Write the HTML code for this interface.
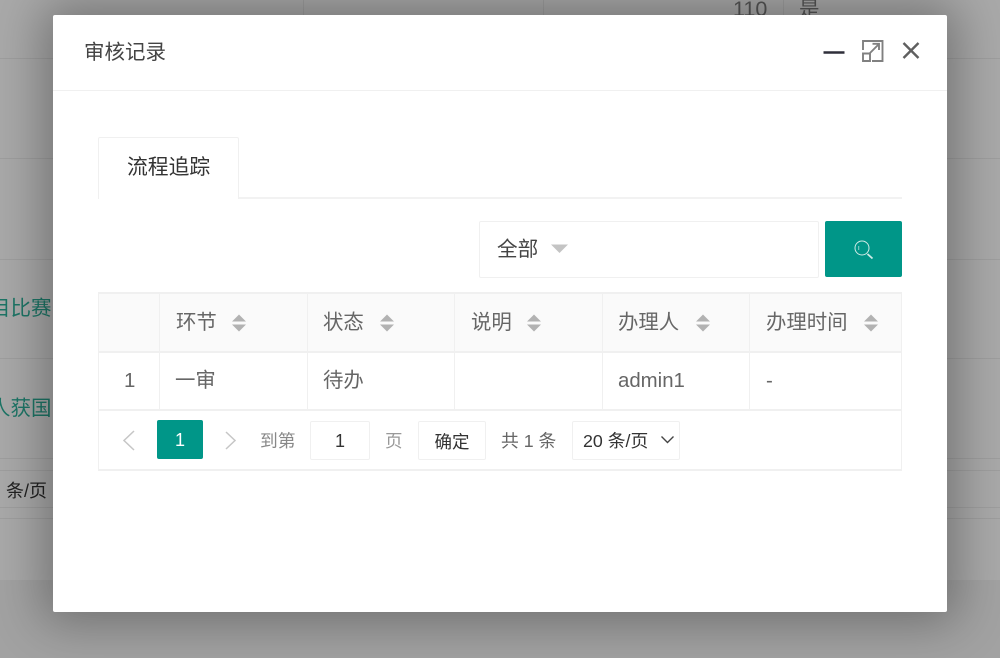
<!DOCTYPE html>
<html lang="zh">
<head>
<meta charset="utf-8">
<style>
html,body{margin:0;padding:0;background:#a9a9a9}
body{width:1000px;height:658px;position:relative;overflow:hidden;background:#a9a9a9;font-family:"Liberation Sans","Noto Sans CJK SC",sans-serif;color:#666;filter:blur(.35px)}
.a{position:absolute;white-space:nowrap}
.bgl{position:absolute;background:#9e9e9e}
.m{position:absolute;left:53px;top:15px;width:894px;height:597px;background:#fff;border-radius:2px;box-shadow:0 0 50px 10px rgba(0,0,0,.32)}
.t{font-size:20.500px;line-height:24px}
.ln{position:absolute;background:#f0f0f0}
.sort{position:absolute;width:14px;height:18px}
.h{font-size:20.400px;line-height:26px;top:310px}
.c{font-size:20.400px;line-height:26px}
</style>
</head>
<body>
<div class="a" style="left:0;top:580px;width:1000px;height:78px;background:#a2a2a2"></div>
<div class="bgl" style="left:0;top:58px;width:1000px;height:1px"></div>
<div class="bgl" style="left:0;top:158px;width:1000px;height:1px"></div>
<div class="bgl" style="left:0;top:259px;width:1000px;height:1px"></div>
<div class="bgl" style="left:0;top:358px;width:1000px;height:1px"></div>
<div class="bgl" style="left:0;top:458px;width:1000px;height:1px"></div>
<div class="bgl" style="left:0;top:470px;width:1000px;height:1px"></div>
<div class="bgl" style="left:0;top:507px;width:1000px;height:1px"></div>
<div class="bgl" style="left:0;top:518px;width:1000px;height:1px"></div>
<div class="bgl" style="left:303px;top:0;width:1px;height:15px"></div>
<div class="bgl" style="left:543px;top:0;width:1px;height:15px"></div>
<div class="bgl" style="left:783px;top:0;width:1px;height:15px"></div>
<div class="a" style="left:733px;top:-3px;color:#555;font-size:21.500px;line-height:24px">110</div>
<div class="a" style="left:799px;top:-2px;color:#555;font-size:20.500px;line-height:24px">是</div>
<div class="a t" style="left:-10px;top:297px;color:#1d7566">目比赛</div>
<div class="a t" style="left:-10px;top:397px;color:#1d7566">人获国</div>
<div class="a" style="left:6px;top:481px;color:#222;font-size:18px;line-height:20px">条/页</div>

<div class="m"></div>

<div class="a" style="left:84px;top:40px;font-size:20.500px;line-height:26px;color:#444">审核记录</div>
<div class="ln" style="left:53px;top:90px;width:894px;height:1px"></div>
<svg class="a" style="left:820px;top:38px" width="105" height="28" viewBox="0 0 105 28" fill="none">
<path d="M3.500 14.500H24.500" stroke="#2f2f3a" stroke-width="2.400"/>
<path d="M43 12V3H62.500V23H52" stroke="#808080" stroke-width="1.900"/>
<path d="M43 15.500H50V23H43Z" stroke="#808080" stroke-width="1.900"/>
<path d="M50 15L58.500 6.500M52.500 5.800H59V12" stroke="#808080" stroke-width="1.900"/>
<path d="M83.500 5L98.500 20M98.500 5L83.500 20" stroke="#5f5f5f" stroke-width="2.400"/>
</svg>

<div class="ln" style="left:98px;top:197px;width:804px;height:1.500px;background:#f2f2f2"></div>
<div class="a" style="left:98px;top:137px;width:139px;height:61px;background:#fff;border:1px solid #f0f0f0;border-bottom:0;border-radius:2px 2px 0 0"></div>
<div class="a" style="left:127px;top:154px;font-size:20.800px;line-height:27px;color:#333">流程追踪</div>

<div class="a" style="left:479px;top:221px;width:338px;height:55px;border:1px solid #f0f0f0;border-radius:2px"></div>
<div class="a" style="left:497px;top:237px;font-size:20.600px;line-height:26px;color:#444">全部</div>
<svg class="a" style="left:551px;top:244px" width="18" height="10"><path d="M0 0.500H17L8.500 9Z" fill="#c4c4c4"/></svg>
<div class="a" style="left:825px;top:221px;width:77px;height:56px;background:#009688;border-radius:2px"></div>
<svg class="a" style="left:854px;top:240px" width="20" height="20" viewBox="0 0 20 20" fill="none"><circle cx="8" cy="8" r="7" stroke="#cfeae6" stroke-width="1"/><path d="M13.500 14L18.500 18.500" stroke="#cfeae6" stroke-width="1.800"/><path d="M4.800 6V10" stroke="#cfeae6" stroke-width=".7"/></svg>

<div class="a" style="left:99px;top:293px;width:802px;height:58px;background:#fafafa"></div>
<div class="ln" style="left:98px;top:292px;width:804px;height:1.500px"></div>
<div class="ln" style="left:98px;top:351px;width:804px;height:1.500px"></div>
<div class="ln" style="left:98px;top:409px;width:804px;height:1.500px"></div>
<div class="ln" style="left:98px;top:469px;width:804px;height:1.500px"></div>
<div class="ln" style="left:98px;top:292px;width:1px;height:178px"></div>
<div class="ln" style="left:901px;top:292px;width:1px;height:178px"></div>
<div class="ln" style="left:159px;top:292px;width:1px;height:118px"></div>
<div class="ln" style="left:307px;top:292px;width:1px;height:118px"></div>
<div class="ln" style="left:454px;top:292px;width:1px;height:118px"></div>
<div class="ln" style="left:602px;top:292px;width:1px;height:118px"></div>
<div class="ln" style="left:749px;top:292px;width:1px;height:118px"></div>

<div class="a h" style="left:176px">环节</div>
<div class="a h" style="left:323px">状态</div>
<div class="a h" style="left:471px">说明</div>
<div class="a h" style="left:618px">办理人</div>
<div class="a h" style="left:766px">办理时间</div>

<svg class="sort" style="left:232px;top:314px" viewBox="0 0 14 18"><path d="M7 0.500L14 7.500H0Z M0 10.500H14L7 17.500Z" fill="#b2b2b2"/></svg>
<svg class="sort" style="left:380px;top:314px" viewBox="0 0 14 18"><path d="M7 0.500L14 7.500H0Z M0 10.500H14L7 17.500Z" fill="#b2b2b2"/></svg>
<svg class="sort" style="left:527px;top:314px" viewBox="0 0 14 18"><path d="M7 0.500L14 7.500H0Z M0 10.500H14L7 17.500Z" fill="#b2b2b2"/></svg>
<svg class="sort" style="left:696px;top:314px" viewBox="0 0 14 18"><path d="M7 0.500L14 7.500H0Z M0 10.500H14L7 17.500Z" fill="#b2b2b2"/></svg>
<svg class="sort" style="left:864px;top:314px" viewBox="0 0 14 18"><path d="M7 0.500L14 7.500H0Z M0 10.500H14L7 17.500Z" fill="#b2b2b2"/></svg>

<div class="a c" style="left:124px;top:368px">1</div>
<div class="a c" style="left:175px;top:368px">一审</div>
<div class="a c" style="left:323px;top:368px">待办</div>
<div class="a c" style="left:618px;top:368px">admin1</div>
<div class="a c" style="left:766px;top:368px">-</div>

<svg class="a" style="left:122px;top:430px" width="14" height="22" fill="none"><path d="M12 1L2 10.500L12 20" stroke="#c6c6c6" stroke-width="1.500"/></svg>
<div class="a" style="left:157px;top:420px;width:46px;height:39px;background:#009688;border-radius:2px;color:#fff;font-size:18px;line-height:40px;text-align:center">1</div>
<svg class="a" style="left:224px;top:431px" width="14" height="20" fill="none"><path d="M2 1L11 9.500L2 18" stroke="#c6c6c6" stroke-width="1.500"/></svg>
<div class="a" style="left:260px;top:429px;font-size:17.800px;line-height:24px;color:#888">到第</div>
<div class="a" style="left:310px;top:421px;width:58px;height:37px;border:1px solid #f0f0f0;border-radius:2px;text-align:center;font-size:18px;line-height:38px;color:#333">1</div>
<div class="a" style="left:385px;top:429px;font-size:17.500px;line-height:24px;color:#999">页</div>
<div class="a" style="left:418px;top:421px;width:66px;height:37px;border:1px solid #f0f0f0;border-radius:2px;text-align:center;font-size:17.500px;line-height:40px;color:#333">确定</div>
<div class="a" style="left:501px;top:429px;font-size:17.800px;line-height:24px;color:#666">共 1 条</div>
<div class="a" style="left:572px;top:421px;width:106px;height:37px;border:1px solid #f0f0f0;border-radius:2px"></div>
<div class="a" style="left:583px;top:429px;font-size:17.800px;line-height:24px;color:#333">20 条/页</div>
<svg class="a" style="left:660px;top:435px" width="15" height="10" fill="none"><path d="M1.500 1.500L7.500 7.500L13.500 1.500" stroke="#444" stroke-width="1.400"/></svg>
</body>
</html>
